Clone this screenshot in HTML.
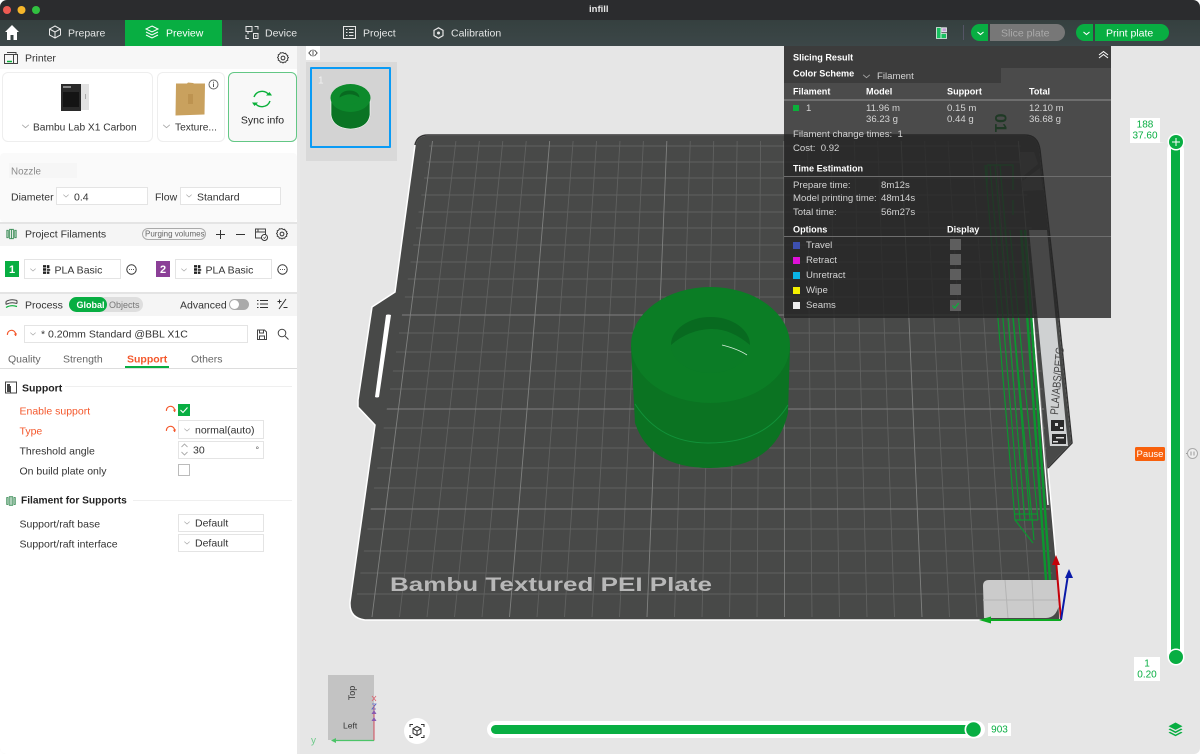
<!DOCTYPE html>
<html><head><meta charset="utf-8"><title>infill</title>
<style>
html,body{margin:0;padding:0;background:#fff}
#r{position:relative;width:1200px;height:754px;overflow:hidden;background:#e6e6e6;font-family:"Liberation Sans",sans-serif;font-size:10.5px;color:#333;border-radius:7px 7px 6px 6px}
.t{position:absolute;white-space:nowrap;transform:translateY(calc(-50% + .5px));line-height:1}
.b{position:absolute;box-sizing:border-box}
.dd{position:absolute;box-sizing:border-box;background:#fff;border:1px solid #e4e4e4}
.w{color:#fff}.g{color:#d8d8d8}
.o{color:#f4582c}
svg{position:absolute;overflow:visible}
.bh{font-weight:bold;color:#fff;font-size:9.100px;transform:translateY(calc(-50% + 1px))}
.p{font-size:9.600px;color:#d4d4d4;transform:translateY(calc(-50% + 1px))}
.tb{font-size:10.500px;color:#e4e6e6}
</style></head><body><div id="r">
<svg width="0" height="0" style="position:absolute"><defs>
<symbol id="ch" viewBox="0 0 10 6"><path d="M1 1l4 3.500L9 1" fill="none" stroke="#a8a8a8" stroke-width="1"/></symbol>
<symbol id="gear" viewBox="0 0 12 12"><path d="M6 .8l1.200 1 1.600-.2.700 1.500 1.500.7-.2 1.600 1 .6-1 1.200.2 1.600-1.500.7-.7 1.500-1.600-.2-1.200 1-1.200-1-1.600.2-.7-1.500-1.500-.7.2-1.600-1-1.200 1-1.200-.2-1.600 1.500-.7.700-1.500 1.600.2z" transform="translate(.3 -.2) scale(.95)" fill="none" stroke="#333" stroke-width="1"/><circle cx="6" cy="6" r="1.900" fill="none" stroke="#333" stroke-width="1"/></symbol>
<symbol id="reset" viewBox="0 0 12 12"><path d="M2 8A4.500 4.500 0 1 1 10.500 6" fill="none" stroke="#f4582c" stroke-width="1.200" transform="rotate(20 6 6)"/><path d="M8.500 5.500l2.500 2 1-2.800z" fill="#f4582c"/></symbol>
<symbol id="fil" viewBox="0 0 14 12"><path d="M2 2h1.500v8H2zM5 1h4v10H5zM10.500 2H12v8h-1.500z" fill="none" stroke="#3f8f5a" stroke-width="1"/><path d="M7 1v10" stroke="#3f8f5a"/></symbol>
<symbol id="bl" viewBox="0 0 10 11"><path d="M0 0h4v3H0zM5 0h3v4H5zM0 4h4v3H0zM5 5h4v2H5zM0 8h4v3H0zM5 8h3v3H5z" fill="#222"/></symbol>
</defs></svg>

<!-- Title bar + toolbar -->
<div class="b" style="left:0;top:0;width:1200px;height:20px;background:#2b2c2e"></div>
<svg style="left:0;top:0" width="50" height="20"><circle cx="7" cy="10" r="4" fill="#ee5a52"/><circle cx="21.500" cy="10" r="4" fill="#f6b62a"/><circle cx="36" cy="10" r="4" fill="#31c140"/></svg>
<span class="t" style="left:589px;top:9px;font-size:9.500px;color:#e8e8e8;font-weight:bold">infill</span>
<div class="b" style="left:0;top:20px;width:1200px;height:26px;background:linear-gradient(#35403f,#3c4748)"></div>
<div class="b" style="left:125px;top:20px;width:97px;height:26px;background:#08ae42"></div>
<svg style="left:4px;top:24px" width="16" height="17" viewBox="0 0 16 17"><path d="M8 1L1 8h2v8h3.500v-5h3v5H13V8h2z" fill="#fff"/></svg>
<svg style="left:48px;top:25px" width="14" height="14" viewBox="0 0 14 14"><path d="M7 1l5.500 3v6L7 13l-5.500-3V4zM1.500 4L7 7l5.500-3M7 7v6" fill="none" stroke="#e8e8e8"/></svg>
<span class="t tb" style="left:68px;top:32.500px">Prepare</span>
<svg style="left:145px;top:25px" width="14" height="15" viewBox="0 0 14 15"><path d="M7 1l6 3-6 3-6-3zM1 7l6 3 6-3M1 10l6 3 6-3" fill="none" stroke="#fff"/></svg>
<span class="t tb" style="left:166px;top:32.500px;color:#fff">Preview</span>
<svg style="left:245px;top:25px" width="14" height="15" viewBox="0 0 14 15"><path d="M1 1.500h6v5H1zM3 6.500V9M9.500 1.500H13v3M1 10v3.500h3M8.500 8.500H13v5H8.500zM10.800 10v2" fill="none" stroke="#e6e6e6"/></svg>
<span class="t tb" style="left:265px;top:32.500px">Device</span>
<svg style="left:343px;top:26px" width="13" height="13" viewBox="0 0 13 13"><path d="M.5.500h12v12H.5zM3 3.500h1.500M6 3.500h4.500M3 6.500h1.500M6 6.500h4.500M3 9.500h1.500M6 9.500h4.500" fill="none" stroke="#e6e6e6"/></svg>
<span class="t tb" style="left:363px;top:32.500px">Project</span>
<svg style="left:433px;top:27px" width="11" height="12" viewBox="0 0 11 12"><path d="M5.500.800l4.500 2.500v5.400l-4.500 2.500L1 8.700V3.300z" fill="none" stroke="#e6e6e6" stroke-width="1.200"/><circle cx="5.500" cy="6" r="1.500" fill="#e6e6e6"/></svg>
<span class="t tb" style="left:451px;top:32.500px">Calibration</span>

<svg style="left:936px;top:27px" width="11" height="12" viewBox="0 0 11 12"><path d="M.5.500h4.500v11H.5zM5 6.500h5.500v5H5z" fill="#18c060" stroke="#e8f5ee" stroke-width=".8"/><path d="M6 .8h4.500v4H6z" fill="#c8a0d8" stroke="#e8f5ee" stroke-width=".8"/></svg>
<div class="b" style="left:963px;top:25px;width:1px;height:15px;background:#556"></div>
<div class="b" style="left:971px;top:24px;width:17px;height:17px;background:#08ae42;border-radius:9px 0 0 9px"></div>
<svg style="left:977px;top:31px" width="7" height="5" viewBox="0 0 7 5"><path d="M.5 1l3 2.500 3-2.500" fill="none" stroke="#fff" stroke-width="1.100"/></svg>
<div class="b" style="left:990px;top:24px;width:75px;height:17px;background:#777;border-radius:0 9px 9px 0"></div>
<span class="t" style="left:1001px;top:32.500px;color:#aaa;font-size:10.500px">Slice plate</span>
<div class="b" style="left:1076px;top:24px;width:17px;height:17px;background:#08ae42;border-radius:9px 0 0 9px"></div>
<svg style="left:1083px;top:31px" width="7" height="5" viewBox="0 0 7 5"><path d="M.5 1l3 2.500 3-2.500" fill="none" stroke="#fff" stroke-width="1.100"/></svg>
<div class="b" style="left:1095px;top:24px;width:74px;height:17px;background:#08ae42;border-radius:0 9px 9px 0"></div>
<span class="t" style="left:1106px;top:32.500px;color:#fff;font-size:10.500px">Print plate</span>

<!-- Viewport -->
<svg style="left:0;top:0" width="1200" height="754" viewBox="0 0 1200 754">
<defs><clipPath id="pc"><path d="M428 135H1025Q1038 135 1040 150L1057 300 1072 443 1048 468 1058 580 1060 620H365Q349 618 350 602L375 425 358 407V400L372 307 395 292 402 240 415 145Q417 135 428 135Z"/></clipPath>
<clipPath id="gc"><path d="M428 141H1020L1032 230 1048 468 1054 618H360L356 600 430 141Z"/></clipPath></defs>
<path d="M428 135H1025Q1038 135 1040 150L1057 300 1072 443 1048 468 1058 580 1060 620H365Q349 618 350 602L375 425 358 407V400L372 307 395 292 402 240 415 145Q417 135 428 135Z" fill="#484948" stroke="#fff" stroke-width="1.500"/>
<path d="M415 145Q417 135 428 135H1025Q1038 135 1040 150L1057 300 1072 443 1048 468" fill="none" stroke="#333" stroke-width="1.500"/>
<g clip-path="url(#gc)" fill="none" stroke-width=".9">
<path stroke="#606160" d="M340 146H1080M340 162H1080M340 178H1080M340 195H1080M340 212H1080M340 228H1080M340 245H1080M340 262H1080M340 279H1080M340 297H1080M340 333H1080M340 352H1080M340 371H1080M340 389H1080M340 428H1080M340 448H1080M340 468H1080M340 488H1080M340 529H1080M340 551H1080M340 573H1080M340 594H1080
M456.400 137L399.500 617M479.800 137L427 617M503.200 137L454.500 617M526.600 137L482 617M573.400 137L537 617M596.800 137L564.500 617M620.200 137L592 617M643.600 137L619.500 617M690.400 137L674.500 617M713.800 137L702 617M737.200 137L729.500 617M760.600 137L757 617M807.400 137L812 617M830.800 137L839.500 617M854.200 137L867 617M877.600 137L894.500 617M924.400 137L949.500 617M947.800 137L977 617M971.200 137L1004.500 617M994.600 137L1032 617"/>
<path stroke="#7f807f" d="M340 315H1080M340 409H1080M340 509H1080M433 137L372 617M550 137L509.500 617M667 137L647 617M784 137L784.500 617M901 137L922 617M1018 137L1059.500 617"/>
</g>
<path d="M386 315q2-1 5 0L379 397q-2 1-4 0z" fill="#fff"/>
<!-- right strip -->
<path d="M1020 152h14l4 12-17 14zM1021 182l19-14 3 22-20 1z" fill="#5e5e5e" clip-path="url(#pc)"/>
<path d="M1029 230H1047L1068 446H1050Z" fill="#cfd1d2"/>
<path d="M1033 318L1048 505" stroke="#fff" stroke-width="1.500"/>
<text transform="translate(1058 415) rotate(-85)" font-family="Liberation Sans,sans-serif" font-size="11.500" fill="#444" textLength="68" lengthAdjust="spacingAndGlyphs">PLA/ABS/PETG</text>
<path d="M1051 420h13v11h-13zM1052 434h14v10h-14z" fill="#2a2a2a"/><path d="M1055 423h3v3h-3zM1060 427h3v2h-3zM1056 437h8v1.500h-8zM1053 441h5v1.500h-5z" fill="#ddd"/>
<text x="995" y="123" transform="rotate(90 995 123)" font-family="Liberation Sans,sans-serif" font-size="17" font-weight="bold" fill="#0c8a2a" text-anchor="middle">01</text>
<!-- toolpaths -->
<g fill="none" stroke="#0c962f">
<path stroke-width="1.200" d="M985 165L1015 520L1033 543M990 165L1020 520M995 165L1025 520M1000 165L1030 520M1005 230L1034 540M1010 230L1038 520M987 165H1013V190M1015 520H1038M1015 514H1038"/>
<path stroke-width="2.400" d="M1021 230L1046 580M1025 230L1050 580"/>
<path stroke-width="1.200" d="M987 165V186M1013 200V215"/>
</g>
<!-- excluded -->
<path d="M989 580H1058L1059 605Q1056 618 1046 618H984L983 586Q983 580 989 580Z" fill="#cbcbcb"/>
<path d="M1005 580L1008 618M1032 580L1034 618M983 600H1058" stroke="#b4b4b4" fill="none"/>
<!-- axes -->
<path d="M1061 620L1056 560" stroke="#c4000a" stroke-width="2"/><path d="M1056 555l-4 10h8z" fill="#c4000a"/>
<path d="M1061 620L1068 575" stroke="#0a1aa8" stroke-width="2"/><path d="M1069 569l-4 9h8z" fill="#0a1aa8"/>
<path d="M1061 620H990" stroke="#0caa22" stroke-width="2"/><path d="M979 620l12-3.500v7z" fill="#0caa22"/>
<text x="390" y="591" font-family="Liberation Sans,sans-serif" font-size="19" font-weight="bold" fill="#b8b8b8" textLength="322" lengthAdjust="spacingAndGlyphs">Bambu Textured PEI Plate</text>
<!-- Model -->
<path d="M631 347L635 423Q650 468 710 468Q775 468 788 413L790 347Z" fill="#0b7322"/>
<path d="M635 404Q660 443 708 443Q765 443 788 405" fill="none" stroke="#12923a" stroke-width="1"/>
<ellipse cx="710.500" cy="345" rx="79.500" ry="58" fill="#0b7d25"/>
<ellipse cx="710.500" cy="345" rx="39.500" ry="28" fill="#0b7c26"/>
<path d="M671 345A39.500 28 0 0 1 750 345Q730 328 710 329Q688 330 671 345Z" fill="#086a20"/>
<path d="M722 345Q738 349 747 355" stroke="#d8f0dc" stroke-width=".8" fill="none"/>
</svg>
<!-- Thumbnail -->
<div class="b" style="left:306px;top:62px;width:91px;height:99px;background:#d9d9d9"></div>
<div class="b" style="left:310px;top:67px;width:81px;height:81px;background:#d3d3d3;border:2px solid #0a9bf5;border-radius:1px"></div>
<span class="t" style="left:318px;top:81px;color:#f2f2f2;font-size:10px">1</span>
<svg style="left:330px;top:83px" width="42" height="48" viewBox="0 0 42 48"><path d="M1 15V32Q3 45 20.500 46Q38 45 40 32V15Z" fill="#0a7424" stroke="#fff" stroke-width=".6"/><ellipse cx="20.500" cy="15" rx="20" ry="14" fill="#0d8a2c"/><ellipse cx="19.500" cy="14.500" rx="10" ry="7" fill="#0d8a2c"/><path d="M9.500 14.500A10 7 0 0 1 29.500 14.500Q20 8 9.500 14.500Z" fill="#086a20"/></svg>
<div class="b" style="left:306px;top:46px;width:14px;height:14px;background:#fff"></div>
<svg style="left:308px;top:49px" width="10" height="8" viewBox="0 0 10 8"><path d="M3.500 1L.8 4l2.700 3M6.500 1L9.200 4 6.500 7M5 .5v7" fill="none" stroke="#333" stroke-width=".8"/></svg>

<!-- Slicing result panel -->
<div class="b" style="left:784px;top:46px;width:327px;height:272px;background:rgba(36,36,36,.8)"></div>
<div class="b" style="left:784px;top:46px;width:327px;height:22px;background:#3c3c3c"></div>
<div class="b" style="left:784px;top:68px;width:74px;height:15px;background:#3c3c3c"></div>
<div class="b" style="left:858px;top:68px;width:143px;height:15px;background:#3c3c3c"></div>
<span class="t bh" style="left:793px;top:56.500px">Slicing Result</span>
<svg style="left:1098px;top:50px" width="11" height="9" viewBox="0 0 11 9"><path d="M1 5l4.500-3.500L10 5M1 8l4.500-3.500L10 8" fill="none" stroke="#fff"/></svg>
<span class="t bh" style="left:793px;top:73px">Color Scheme</span>
<svg style="left:862px;top:74px" width="9" height="5"><use href="#ch" width="9" height="5"/></svg>
<span class="t p" style="left:877px;top:75.500px">Filament</span>
<span class="t bh" style="left:793px;top:91px">Filament</span><span class="t bh" style="left:866px;top:91px">Model</span><span class="t bh" style="left:947px;top:91px">Support</span><span class="t bh" style="left:1029px;top:91px">Total</span>
<div class="b" style="left:784px;top:99px;width:327px;height:2px;background:#6e6e6e"></div>
<div class="b" style="left:793px;top:105px;width:6px;height:6px;background:#0ab03a"></div>
<span class="t p" style="left:806px;top:108px">1</span>
<span class="t p" style="left:866px;top:108px">11.96 m</span><span class="t p" style="left:866px;top:119px">36.23 g</span>
<span class="t p" style="left:947px;top:108px">0.15 m</span><span class="t p" style="left:947px;top:119px">0.44 g</span>
<span class="t p" style="left:1029px;top:108px">12.10 m</span><span class="t p" style="left:1029px;top:119px">36.68 g</span>
<span class="t p" style="left:793px;top:134px">Filament change times:&nbsp; 1</span>
<span class="t p" style="left:793px;top:147.500px">Cost:&nbsp; 0.92</span>
<span class="t bh" style="left:793px;top:168px">Time Estimation</span>
<div class="b" style="left:784px;top:176px;width:327px;height:1px;background:#6e6e6e"></div>
<span class="t p" style="left:793px;top:184.500px">Prepare time:</span><span class="t p" style="left:881px;top:184.500px">8m12s</span>
<span class="t p" style="left:793px;top:198px">Model printing time:</span><span class="t p" style="left:881px;top:198px">48m14s</span>
<span class="t p" style="left:793px;top:211.500px">Total time:</span><span class="t p" style="left:881px;top:211.500px">56m27s</span>
<span class="t bh" style="left:793px;top:228.500px">Options</span><span class="t bh" style="left:947px;top:228.500px">Display</span>
<div class="b" style="left:784px;top:236px;width:327px;height:1px;background:#6e6e6e"></div>
<div class="b" style="left:793px;top:241.500px;width:7px;height:7px;background:#3d50b0"></div><span class="t p" style="left:806px;top:244.500px">Travel</span>
<div class="b" style="left:793px;top:256.500px;width:7px;height:7px;background:#e010d8"></div><span class="t p" style="left:806px;top:259.500px">Retract</span>
<div class="b" style="left:793px;top:271.500px;width:7px;height:7px;background:#0ab4e6"></div><span class="t p" style="left:806px;top:274.500px">Unretract</span>
<div class="b" style="left:793px;top:286.500px;width:7px;height:7px;background:#f4f000"></div><span class="t p" style="left:806px;top:289.500px">Wipe</span>
<div class="b" style="left:793px;top:301.500px;width:7px;height:7px;background:#eee"></div><span class="t p" style="left:806px;top:304.500px">Seams</span>
<div class="b" style="left:950px;top:239px;width:11px;height:11px;background:#5e5e5e"></div>
<div class="b" style="left:950px;top:254px;width:11px;height:11px;background:#5e5e5e"></div>
<div class="b" style="left:950px;top:269px;width:11px;height:11px;background:#5e5e5e"></div>
<div class="b" style="left:950px;top:284px;width:11px;height:11px;background:#5e5e5e"></div>
<div class="b" style="left:950px;top:300px;width:11px;height:11px;background:#5e5e5e"></div>
<svg style="left:950px;top:300px" width="11" height="11" viewBox="0 0 11 11"><path d="M2.500 5.500l2.200 2.500 4-5" fill="none" stroke="#0ab03a" stroke-width="1.300"/></svg>

<!-- Vertical slider -->
<div class="b" style="left:1167px;top:142px;width:17px;height:520px;background:#fff;border-radius:8px"></div>
<div class="b" style="left:1171px;top:142px;width:9px;height:515px;background:#08ae42"></div>
<svg style="left:1166px;top:132px" width="20" height="20"><circle cx="10" cy="10" r="8.500" fill="#fff"/><circle cx="10" cy="10" r="7" fill="#08ae42"/><path d="M10 6v8M6 10h8" stroke="#fff" stroke-width="1"/></svg>
<svg style="left:1166px;top:647px" width="20" height="20"><circle cx="10" cy="10" r="8.500" fill="#fff"/><circle cx="10" cy="10" r="7" fill="#08ae42"/></svg>
<svg style="left:1130px;top:118px" width="36" height="26"><path d="M0 0h30v24.500h5L30 25H0z" fill="#fff"/></svg>
<span class="t" style="left:1130px;top:125px;width:30px;text-align:center;color:#08ae42;font-size:10px">188</span>
<span class="t" style="left:1130px;top:136px;width:30px;text-align:center;color:#08ae42;font-size:10px">37.60</span>
<div class="b" style="left:1134px;top:657px;width:26px;height:24px;background:#fff"></div>
<span class="t" style="left:1134px;top:664px;width:26px;text-align:center;color:#08ae42;font-size:10px">1</span>
<span class="t" style="left:1134px;top:675px;width:26px;text-align:center;color:#08ae42;font-size:10px">0.20</span>
<div class="b" style="left:1135px;top:447px;width:30px;height:14px;background:#f8600c;border-radius:1.500px"></div>
<span class="t" style="left:1135px;top:453.500px;width:30px;text-align:center;color:#fff;font-size:9.500px">Pause</span>
<svg style="left:1185px;top:447px" width="14" height="13" viewBox="0 0 14 13"><circle cx="7.500" cy="6.500" r="5" fill="#eee" stroke="#aaa"/><path d="M6 4.500v4M9 4.500v4M1 6.500h1" stroke="#999"/></svg>

<!-- Horizontal slider -->
<div class="b" style="left:487px;top:721px;width:498px;height:17px;background:#fff;border-radius:9px"></div>
<div class="b" style="left:491px;top:725px;width:482px;height:9px;background:#08ae42;border-radius:4.500px 0 0 4.500px"></div>
<svg style="left:964px;top:720px" width="19" height="19"><circle cx="9.500" cy="9.500" r="9" fill="#fff"/><circle cx="9.500" cy="9.500" r="7.300" fill="#08ae42"/></svg>
<div class="b" style="left:988px;top:723px;width:23px;height:13px;background:#fff"></div>
<span class="t" style="left:988px;top:729.500px;width:23px;text-align:center;color:#08ae42;font-size:10px">903</span>
<svg style="left:1168px;top:722px" width="15" height="16" viewBox="0 0 15 16"><path d="M7.500 .500l7 3.700-7 3.700-7-3.700z" fill="#08ae42"/><path d="M2 6.500l5.500 2.900L13 6.500l1.500.9-7 3.700-7-3.700zM2 9.700l5.500 2.900L13 9.700l1.500.9-7 3.700-7-3.700z" fill="#08ae42"/></svg>

<!-- Orientation cube -->
<div class="b" style="left:328px;top:675px;width:46px;height:65px;background:#c3c3c3"></div>
<span class="t" style="left:345px;top:692.500px;transform:translateY(-50%) rotate(-90deg);font-size:9px;color:#333">Top</span>
<span class="t" style="left:343px;top:725px;font-size:8.500px;color:#333">Left</span>
<svg style="left:305px;top:690px" width="75" height="60" viewBox="0 0 75 60"><path d="M69 50.500V15" stroke="#d04a5a"/><path d="M30 50.500H69" stroke="#4cc468" stroke-width="1.300"/><path d="M26 50.500l5-2.500v5z" fill="#4cc468"/><path d="M67 6l4 5M71 6l-4 5" stroke="#d9626e" stroke-width=".8"/><path d="M67 14h4l-4 5h4" stroke="#5a6ac8" stroke-width=".8" fill="none"/><path d="M69 20l-2.500 4h5zM69 27l-2.500 4h5z" fill="#8a5ab0"/></svg>
<span class="t" style="left:311px;top:741px;color:#6cca88;font-size:10px">y</span>
<div class="b" style="left:404px;top:718px;width:26px;height:26px;background:#fff;border-radius:13px"></div>
<svg style="left:409px;top:723px" width="16" height="16" viewBox="0 0 16 16"><path d="M1 4V1.500H4M12 1.500h3V4M1 12v2.500h3M12 14.500h3V12" fill="none" stroke="#333"/><path d="M8 3.500l4 2.200v4.600L8 12.500l-4-2.200V5.700zM4 5.700L8 8l4-2.300M8 8v4.500" fill="none" stroke="#333"/></svg>

<!-- Left panel -->
<div class="b" style="left:0;top:46px;width:300px;height:708px;background:#fff"></div>
<div class="b" style="left:297px;top:46px;width:3px;height:708px;background:#e8e8e8"></div>
<div class="b" style="left:0;top:46px;width:297px;height:23px;background:#f7f7f7"></div>
<svg style="left:4px;top:52px" width="14" height="12" viewBox="0 0 14 12"><path d="M.5 2.500h13v9H.5zM3 .5h9v2" fill="none" stroke="#444"/><path d="M3 9.500h5" stroke="#0ab03a" stroke-width="1.500"/><path d="M9.500 3v8" stroke="#444"/></svg>
<span class="t" style="left:25px;top:57.500px;color:#333">Printer</span>
<svg style="left:277px;top:52px" width="12" height="12"><use href="#gear" width="12" height="12"/></svg>
<div class="b" style="left:2px;top:72px;width:151px;height:70px;background:#fff;border:1px solid #eee;border-radius:6px"></div>
<div class="b" style="left:157px;top:72px;width:68px;height:70px;background:#fff;border:1px solid #eee;border-radius:6px"></div>
<div class="b" style="left:228px;top:72px;width:69px;height:70px;background:#f8f8f8;border:1px solid #63c785;border-radius:6px"></div>
<svg style="left:60px;top:83px" width="30" height="29" viewBox="0 0 30 29"><path d="M13 1h16v26H13z" fill="#e2e2e2"/><path d="M1 1h20v27H1z" fill="#2a2a2a"/><path d="M3 9h16v15H3z" fill="#141414"/><path d="M3 3h8v2H3z" fill="#888"/><path d="M25 11h1v5h-1z" fill="#aaa"/></svg>
<svg style="left:21px;top:124px" width="9" height="5"><use href="#ch" width="9" height="5"/></svg>
<span class="t" style="left:33px;top:127.500px;color:#333;font-size:10.200px">Bambu Lab X1 Carbon</span>
<svg style="left:175px;top:82px" width="31" height="34" viewBox="0 0 31 34"><path d="M1 1.500h11l1-1 5 .5 1 .5h11l-.5 31-29 1z" fill="#c9a15e"/><path d="M13 12h5v10h-5z" fill="#bd9350"/></svg>
<svg style="left:208px;top:79px" width="11" height="11" viewBox="0 0 11 11"><circle cx="5.500" cy="5.500" r="4.500" fill="#fff" stroke="#666"/><path d="M5.500 4.500v3.500M5.500 2.700v1" stroke="#555"/></svg>
<svg style="left:162px;top:124px" width="9" height="5"><use href="#ch" width="9" height="5"/></svg>
<span class="t" style="left:175px;top:127.500px;color:#333;font-size:10.200px">Texture...</span>
<svg style="left:251px;top:89px" width="22" height="20" viewBox="0 0 22 20"><path d="M3 8A8.500 8.500 0 0 1 18 6M19 12A8.500 8.500 0 0 1 4 14" fill="none" stroke="#0ab03a" stroke-width="1.400"/><path d="M15 6.500h6L18.500 3zM1 13.500h6L3.500 17z" fill="#0ab03a"/></svg>
<span class="t" style="left:228px;top:119.500px;width:69px;text-align:center;color:#222;font-size:10.500px">Sync info</span>

<div class="b" style="left:0;top:153px;width:297px;height:69px;background:#fafafa;border-radius:4px"></div>
<div class="b" style="left:9px;top:163px;width:68px;height:15px;background:#f6f6f6"></div>
<span class="t" style="left:11px;top:171.500px;color:#8a8a8a;font-size:9.800px">Nozzle</span>
<span class="t" style="left:11px;top:196.500px">Diameter</span>
<div class="dd" style="left:56px;top:187px;width:92px;height:18px"></div>
<svg style="left:62px;top:194px" width="8" height="4"><use href="#ch" width="8" height="4"/></svg>
<span class="t" style="left:74px;top:196.500px">0.4</span>
<span class="t" style="left:155px;top:196.500px">Flow</span>
<div class="dd" style="left:180px;top:187px;width:101px;height:18px"></div>
<svg style="left:185px;top:194px" width="8" height="4"><use href="#ch" width="8" height="4"/></svg>
<span class="t" style="left:197px;top:196.500px">Standard</span>

<div class="b" style="left:0;top:222px;width:297px;height:24px;background:#f5f5f5;border-top:2px solid #e4e4e4"></div>
<svg style="left:5px;top:228px" width="13" height="12"><use href="#fil" width="13" height="12"/></svg>
<span class="t" style="left:25px;top:234px">Project Filaments</span>
<div class="b" style="left:142px;top:228px;width:64px;height:12px;border:1px solid #aaa;border-radius:6px"></div>
<span class="t" style="left:145px;top:233.500px;font-size:8px;color:#666">Purging volumes</span>
<svg style="left:215px;top:229px" width="11" height="11"><path d="M5.500 1v9M1 5.500h9" stroke="#333"/></svg>
<svg style="left:235px;top:229px" width="11" height="11"><path d="M1 5.500h9" stroke="#333"/></svg>
<svg style="left:255px;top:228px" width="13" height="13" viewBox="0 0 13 13"><path d="M.5 1h10v9H.5zM.5 4h10M3 1v3" fill="none" stroke="#444"/><circle cx="9.500" cy="9.500" r="3" fill="#fff" stroke="#333"/><path d="M8.500 9.500l1 1 1.500-2" stroke="#333" fill="none" stroke-width=".7"/></svg>
<svg style="left:276px;top:228px" width="12" height="12"><use href="#gear" width="12" height="12"/></svg>

<div class="b" style="left:5px;top:261px;width:14px;height:16px;background:#08ae42"></div>
<span class="t" style="left:5px;top:269.500px;width:14px;text-align:center;color:#fff;font-weight:bold;font-size:11px">1</span>
<div class="dd" style="left:24px;top:259px;width:97px;height:20px"></div>
<svg style="left:29px;top:268px" width="8" height="4"><use href="#ch" width="8" height="4"/></svg>
<svg style="left:43px;top:265px" width="8" height="9"><use href="#bl" width="8" height="9"/></svg>
<span class="t" style="left:54.500px;top:270px">PLA Basic</span>
<svg style="left:126px;top:264px" width="11" height="11" viewBox="0 0 11 11"><circle cx="5.500" cy="5.500" r="4.700" fill="none" stroke="#333"/><path d="M3 5.500h.8M5.100 5.500h.8M7.200 5.500h.8" stroke="#333"/></svg>
<div class="b" style="left:156px;top:261px;width:14px;height:16px;background:#8b3f97"></div>
<span class="t" style="left:156px;top:269.500px;width:14px;text-align:center;color:#fff;font-weight:bold;font-size:11px">2</span>
<div class="dd" style="left:175px;top:259px;width:97px;height:20px"></div>
<svg style="left:180px;top:268px" width="8" height="4"><use href="#ch" width="8" height="4"/></svg>
<svg style="left:194px;top:265px" width="8" height="9"><use href="#bl" width="8" height="9"/></svg>
<span class="t" style="left:205.500px;top:270px">PLA Basic</span>
<svg style="left:277px;top:264px" width="11" height="11" viewBox="0 0 11 11"><circle cx="5.500" cy="5.500" r="4.700" fill="none" stroke="#333"/><path d="M3 5.500h.8M5.100 5.500h.8M7.200 5.500h.8" stroke="#333"/></svg>

<div class="b" style="left:0;top:292px;width:297px;height:24px;background:#f5f5f5;border-top:2px solid #e4e4e4"></div>
<svg style="left:5px;top:298px" width="13" height="12" viewBox="0 0 13 12"><path d="M1 3.500Q6 .5 12 2.500M1 6.500Q6 3.500 12 5.500M1 3.500v3M12 2.500v3" fill="none" stroke="#444"/><path d="M1 9.500Q6 6.500 12 8.500" fill="none" stroke="#0ab03a" stroke-width="1.200"/></svg>
<span class="t" style="left:25px;top:304.500px">Process</span>
<div class="b" style="left:69px;top:297px;width:74px;height:15px;background:#dedede;border-radius:8px"></div>
<div class="b" style="left:69px;top:297px;width:38px;height:15px;background:#08ae42;border-radius:8px"></div>
<span class="t" style="left:76.500px;top:304.500px;color:#fff;font-size:9px;font-weight:bold">Global</span>
<span class="t" style="left:109px;top:304.500px;color:#777;font-size:9px">Objects</span>
<span class="t" style="left:180px;top:304.500px">Advanced</span>
<div class="b" style="left:229px;top:299px;width:20px;height:11px;background:#aaa;border-radius:6px"></div>
<div class="b" style="left:230px;top:300px;width:9px;height:9px;background:#fff;border-radius:5px"></div>
<svg style="left:257px;top:299px" width="11" height="10"><path d="M0 1.500h1.500M3 1.500h8M0 5h1.500M3 5h8M0 8.500h1.500M3 8.500h8" stroke="#333"/></svg>
<svg style="left:277px;top:298px" width="11" height="12" viewBox="0 0 11 12"><path d="M2 11L9 1M.5 3.500h4M2.500 1.500v4M6.500 9.500h4" stroke="#333" fill="none"/></svg>

<svg style="left:6px;top:329px" width="11" height="11"><use href="#reset" width="11" height="11"/></svg>
<div class="dd" style="left:24px;top:325px;width:224px;height:18px"></div>
<svg style="left:29px;top:332px" width="8" height="4"><use href="#ch" width="8" height="4"/></svg>
<span class="t" style="left:41px;top:334px">* 0.20mm Standard @BBL X1C</span>
<svg style="left:257px;top:329px" width="10" height="11" viewBox="0 0 10 11"><path d="M.5 1h7l2 2v7.500H.5zM2.500 1v3h4V1M2.500 10.500V7h5v3.500" fill="none" stroke="#444"/></svg>
<svg style="left:277px;top:328px" width="12" height="12" viewBox="0 0 12 12"><circle cx="5" cy="5" r="3.800" fill="none" stroke="#444"/><path d="M8 8l3.500 3.500" stroke="#444"/></svg>

<span class="t" style="left:8px;top:358.500px;color:#666">Quality</span>
<span class="t" style="left:63px;top:358.500px;color:#666">Strength</span>
<span class="t o" style="left:127px;top:358.500px;font-weight:bold">Support</span>
<span class="t" style="left:191px;top:358.500px;color:#666">Others</span>
<div class="b" style="left:0;top:368px;width:297px;height:1px;background:#ddd"></div>
<div class="b" style="left:125px;top:366px;width:44px;height:2px;background:#08ae42"></div>

<svg style="left:5px;top:381px" width="12" height="13" viewBox="0 0 12 13"><path d="M.5 1h11v11h-11zM5.500 5v7" fill="none" stroke="#444"/><path d="M2 3h3v8H2z" fill="#444"/></svg>
<span class="t" style="left:22px;top:388px;font-weight:bold;color:#222">Support</span>
<div class="b" style="left:65px;top:386px;width:227px;height:1px;background:#efefef"></div>
<span class="t o" style="left:19.500px;top:410.500px">Enable support</span>
<svg style="left:165px;top:405px" width="11" height="11"><use href="#reset" width="11" height="11"/></svg>
<div class="b" style="left:178px;top:404px;width:12px;height:12px;background:#08ae42"></div>
<svg style="left:178px;top:404px" width="12" height="12"><path d="M2.500 6l2.500 2.500 4.500-5" fill="none" stroke="#fff" stroke-width="1.100"/></svg>
<span class="t o" style="left:19.500px;top:430.500px">Type</span>
<svg style="left:165px;top:425px" width="11" height="11"><use href="#reset" width="11" height="11"/></svg>
<div class="dd" style="left:178px;top:420px;width:86px;height:19px"></div>
<svg style="left:183px;top:428px" width="8" height="4"><use href="#ch" width="8" height="4"/></svg>
<span class="t" style="left:195px;top:429.500px">normal(auto)</span>
<span class="t" style="left:19.500px;top:450.500px">Threshold angle</span>
<div class="dd" style="left:178px;top:441px;width:86px;height:18px"></div>
<svg style="left:180px;top:442px" width="9" height="15"><path d="M1.500 5L4.500 2l3 3M1.500 10l3 3 3-3" fill="none" stroke="#aaa" stroke-width=".9"/></svg>
<span class="t" style="left:193px;top:450px">30</span>
<span class="t" style="left:255.500px;top:449.500px;font-size:9px;color:#555">°</span>
<span class="t" style="left:19.500px;top:470.500px">On build plate only</span>
<div class="b" style="left:178px;top:464px;width:12px;height:12px;background:#fff;border:1px solid #bbb"></div>
<svg style="left:5px;top:495px" width="12" height="12"><use href="#fil" width="12" height="12"/></svg>
<span class="t" style="left:21px;top:501px;font-weight:bold;color:#222;font-size:10.200px">Filament for Supports</span>
<div class="b" style="left:133px;top:500px;width:159px;height:1px;background:#efefef"></div>
<span class="t" style="left:19.500px;top:523.500px">Support/raft base</span>
<div class="dd" style="left:178px;top:514px;width:86px;height:18px"></div>
<svg style="left:183px;top:521px" width="8" height="4"><use href="#ch" width="8" height="4"/></svg>
<span class="t" style="left:195px;top:523px">Default</span>
<span class="t" style="left:19.500px;top:544px">Support/raft interface</span>
<div class="dd" style="left:178px;top:534px;width:86px;height:18px"></div>
<svg style="left:183px;top:541px" width="8" height="4"><use href="#ch" width="8" height="4"/></svg>
<span class="t" style="left:195px;top:543px">Default</span>
</div></body></html>
